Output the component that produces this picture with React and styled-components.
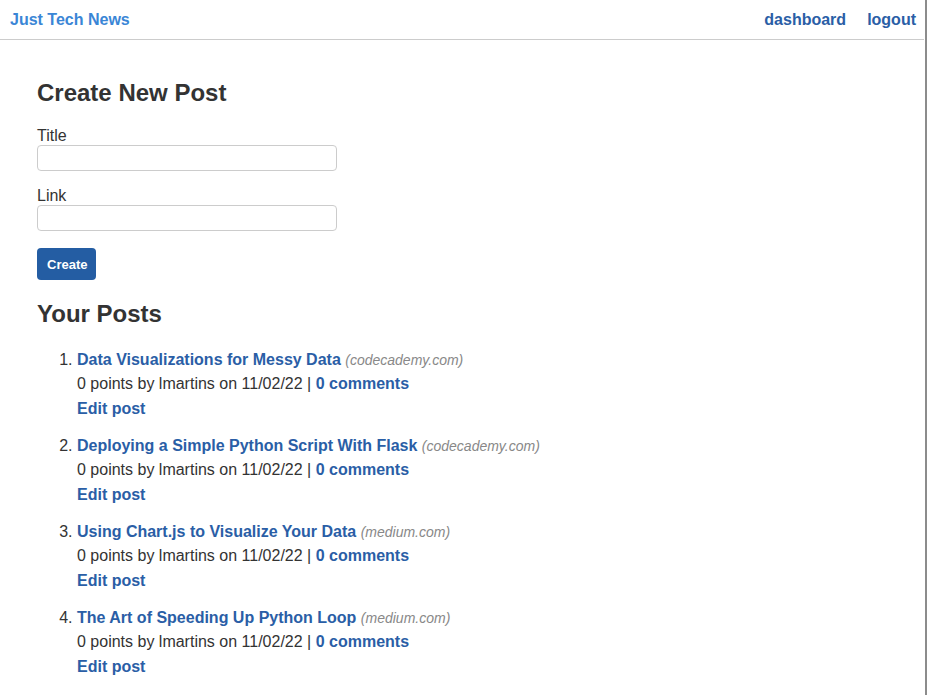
import styled, { createGlobalStyle } from 'styled-components';

const posts = [
    { title: 'Data Visualizations for Messy Data', domain: 'codecademy.com' },
    { title: 'Deploying a Simple Python Script With Flask', domain: 'codecademy.com' },
    { title: 'Using Chart.js to Visualize Your Data', domain: 'medium.com' },
    { title: 'The Art of Speeding Up Python Loop', domain: 'medium.com' },
];

const App = () => {
    return (
        <>
            <GlobalStyle/>
            <Page>
                <Header>
                    <Brand href="#">Just Tech News</Brand>
                    <Nav>
                        <NavLink href="#">dashboard</NavLink>
                        <NavLink href="#">logout</NavLink>
                    </Nav>
                </Header>

                <Main>
                    <Heading>Create New Post</Heading>
                    <Form>
                        <Label>Title</Label>
                        <Input type="text"/>
                        <Label>Link</Label>
                        <Input type="text"/>
                        <Button type="button">Create</Button>
                    </Form>

                    <Heading $list>Your Posts</Heading>
                    <PostList>
                        {
                            posts.map(post => (
                                <PostItem key={post.title}>
                                    <div>
                                        <PostLink href="#">{post.title}</PostLink>{' '}
                                        <Domain>({post.domain})</Domain>
                                    </div>
                                    <Meta>
                                        0 points by lmartins on 11/02/22 | <PostLink href="#">0 comments</PostLink>
                                    </Meta>
                                    <EditRow>
                                        <PostLink href="#">Edit post</PostLink>
                                    </EditRow>
                                </PostItem>
                            ))
                        }
                    </PostList>
                </Main>
            </Page>
        </>
    )
}
export default App

const GlobalStyle = createGlobalStyle`
  * {
    box-sizing: border-box;
  }

  body {
    margin: 0;
    background: #fff;
    font-family: "Liberation Sans", Arial, sans-serif;
    color: #333;
  }
`

const Page = styled.div`
  width: 927px;
  min-height: 100vh;
  border-right: 2px solid #8c8c8c;
  padding-right: 1px;
  background: #fff;
`

const Header = styled.header`
  display: flex;
  justify-content: space-between;
  align-items: center;
  height: 40px;
  padding: 1px 8px 0 10px;
  border-bottom: 1px solid #cccccc;
`

const Brand = styled.a`
  color: #3a86d6;
  font-weight: bold;
  font-size: 16px;
  text-decoration: none;
`

const Nav = styled.nav`
  display: flex;
  gap: 21px;
`

const NavLink = styled.a`
  color: #2a5ea6;
  font-weight: bold;
  font-size: 16px;
  text-decoration: none;
`

const Main = styled.main`
  padding: 39px 37px 0;
`

const Heading = styled.h2`
  font-size: 24px;
  font-weight: bold;
  color: #333;
  margin: 0 0 20px;
`

const Form = styled.form`
  display: flex;
  flex-direction: column;
  align-items: flex-start;
  margin-bottom: 20px;
`

const Label = styled.label`
  font-size: 16px;
  line-height: 18px;
  color: #333;
`

const Input = styled.input`
  width: 300px;
  height: 26px;
  border: 1px solid #cccccc;
  border-radius: 4px;
  margin-bottom: 16px;
`

const Button = styled.button`
  height: 32px;
  margin-top: 1px;
  padding: 0 9px 0 10px;
  background: #245da3;
  border: none;
  border-radius: 4px;
  color: #fff;
  font-family: "Liberation Sans", Arial, sans-serif;
  font-weight: bold;
  font-size: 13px;
`

const PostList = styled.ol`
  margin: 0;
  padding-left: 40px;
`

const PostItem = styled.li`
  font-size: 16px;
  line-height: 24px;
  margin-bottom: 13px;
`

const PostLink = styled.a`
  color: #2a5ea6;
  font-weight: bold;
  text-decoration: none;
`

const Domain = styled.span`
  color: #888;
  font-style: italic;
  font-size: 14px;
`

const Meta = styled.div`
  color: #333;
`

const EditRow = styled.div`
  margin-top: 1px;
`
